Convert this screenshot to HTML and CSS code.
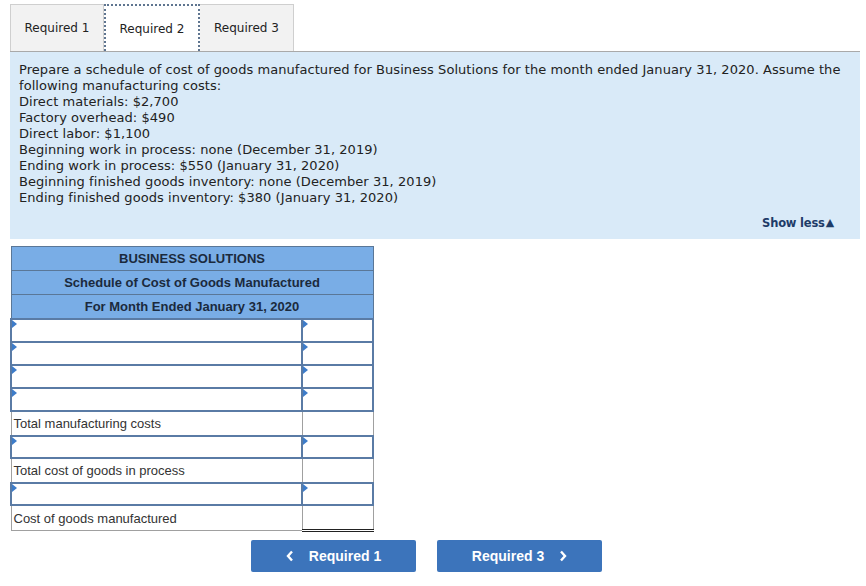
FILE: index.html
```html
<!DOCTYPE html>
<html>
<head>
<meta charset="utf-8">
<link rel="stylesheet" href="styles.css">
</head>
<body>
<div class="page">
  <div class="tabs">
    <div class="tab">Required 1</div>
    <div class="tab active">Required 2</div>
    <div class="tab">Required 3</div>
  </div>
  <div class="panel">
    <p class="prompt">Prepare a schedule of cost of goods manufactured for Business Solutions for the month ended January 31, 2020. Assume the following manufacturing costs:<br>
    Direct materials: $2,700<br>
    Factory overhead: $490<br>
    Direct labor: $1,100<br>
    Beginning work in process: none (December 31, 2019)<br>
    Ending work in process: $550 (January 31, 2020)<br>
    Beginning finished goods inventory: none (December 31, 2019)<br>
    Ending finished goods inventory: $380 (January 31, 2020)</p>
    <div class="showless">Show less<span class="tri">&#9650;</span></div>
  </div>
  <table class="sched">
    <tr class="hd"><td colspan="2">BUSINESS SOLUTIONS</td></tr>
    <tr class="hd"><td colspan="2">Schedule of Cost of Goods Manufactured</td></tr>
    <tr class="hd"><td colspan="2">For Month Ended January 31, 2020</td></tr>
    <tr class="in"><td class="l"></td><td class="r"></td></tr>
    <tr class="in"><td class="l"></td><td class="r"></td></tr>
    <tr class="in"><td class="l"></td><td class="r"></td></tr>
    <tr class="in"><td class="l"></td><td class="r"></td></tr>
    <tr class="tot"><td class="l">Total manufacturing costs</td><td class="r"></td></tr>
    <tr class="in"><td class="l"></td><td class="r"></td></tr>
    <tr class="tot"><td class="l">Total cost of goods in process</td><td class="r"></td></tr>
    <tr class="in"><td class="l"></td><td class="r"></td></tr>
    <tr class="tot last"><td class="l">Cost of goods manufactured</td><td class="r dbl"></td></tr>
  </table>
  <div class="nav">
    <div class="btn"><svg class="chev" width="8" height="12" viewBox="0 0 8 12"><polyline points="6,1.5 2,6 6,10.5" fill="none" stroke="#fff" stroke-width="2.4"/></svg>Required 1</div>
    <div class="btn">Required 3<svg class="chev r" width="8" height="12" viewBox="0 0 8 12"><polyline points="2,1.5 6,6 2,10.5" fill="none" stroke="#fff" stroke-width="2.4"/></svg></div>
  </div>
</div>
</body>
</html>
```
FILE: styles.css
```css
html, body { margin: 0; padding: 0; background: #fff; }
.page { padding: 4px 6px 0 10px; font-family: "DejaVu Sans", Verdana, sans-serif; }
.tabs { display: flex; height: 47px; }
.tab {
  width: 94px; box-sizing: border-box;
  background: #f2f2f2; border: 1px solid #cfcfcf; border-bottom: none;
  font-size: 12px; color: #222; display: flex; align-items: center; justify-content: center;
}
.tab + .tab { border-left: none; }
.tab.active { background: #fff; border: 2px dotted #5f7590; border-bottom: none; width: 96px; }
.panel {
  background: #d9eaf8; border-top: 1px solid #a9a9a9;
  padding: 10px 9px 8px 9px; height: 169px; position: relative;
}
.prompt { margin: 0; font-size: 13px; line-height: 16px; color: #222; letter-spacing: 0.06px; }
.showless {
  position: absolute; right: 26px; bottom: 9px;
  font-size: 11.5px; font-weight: bold; color: #1e3c68; letter-spacing: -0.2px;
}
.tri { font-size: 11px; margin-left: 1px; position: relative; top: -1px; }
.sched {
  margin-top: 7px; border-collapse: collapse; width: 364px;
  font-family: "Liberation Sans", Arial, sans-serif; font-size: 13px;
}
.sched td { padding: 0; }
.hd td {
  background: #79ade6; border: 1px solid #5a7797; text-align: center; height: 23px;
  color: #1b2a3d; font-weight: bold; font-size: 13px;
}
.in td { border: 2px solid #5a7ba5; height: 21px; position: relative; }
.tot + .in td { height: 20px; }
.in td::before {
  content: ""; position: absolute; left: 0; top: 0;
  border-left: 5px solid #3d7cc9; border-top: 4px solid transparent; border-bottom: 4px solid transparent;
}
.l { width: 288px; }
.tot td { border: 1px solid #a0a0a0; height: 23px; color: #333; padding-left: 2px; vertical-align: middle; }
.tot td.r { padding-left: 0; }
.dbl { border-bottom: 3px double #222 !important; }
.nav { display: flex; gap: 21px; margin: 8px 0 0 241px; }
.btn {
  width: 165px; height: 32px; background: #3c74bb; border-radius: 2px;
  color: #fff; font-family: "Liberation Sans", Arial, sans-serif; font-weight: bold; font-size: 14px;
  display: flex; align-items: center; justify-content: center;
}
.chev { margin-right: 15px; }
.chev.r { margin-right: 0; margin-left: 15px; }
```
